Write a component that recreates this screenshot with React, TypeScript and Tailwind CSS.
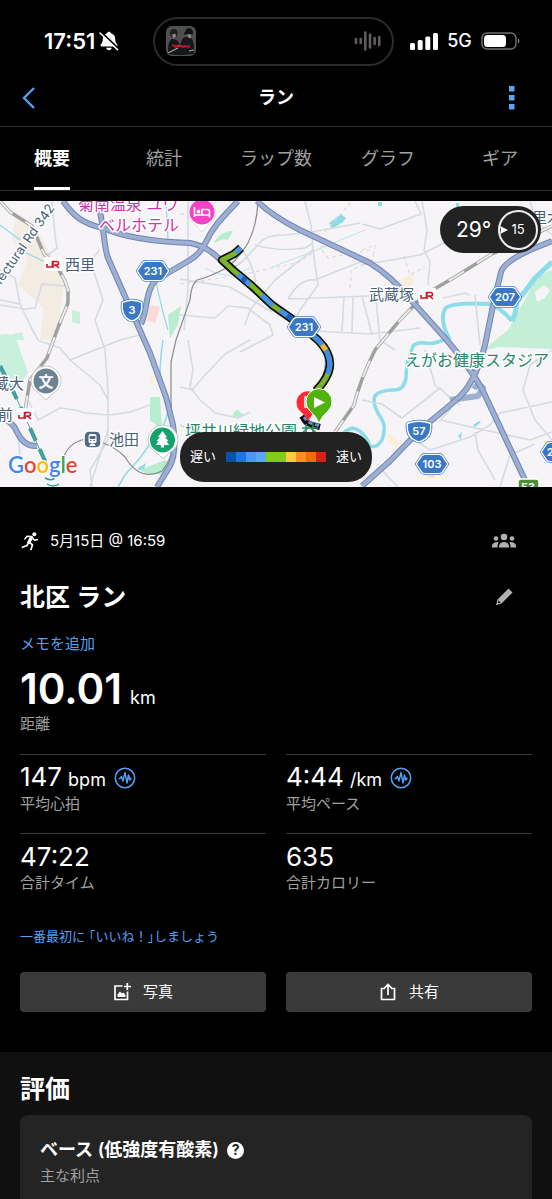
import React, { useState } from 'react';

const tabs = ['概要', '統計', 'ラップ数', 'グラフ', 'ギア'];

const paceColors = [
  'bg-[#0552a8]',
  'bg-[#1b77da]',
  'bg-[#4a98f0]',
  'bg-[#5aa7fa]',
  'bg-[#82cb1a]',
  'bg-[#82cb1a]',
  'bg-[#ffcb45]',
  'bg-[#ff8c28]',
  'bg-[#ef6a10]',
  'bg-[#d6201e]',
];

const stats = [
  { value: '147', unit: 'bpm', label: '平均心拍', chart: true },
  { value: '4:44', unit: '/km', label: '平均ペース', chart: true },
  { value: '47:22', unit: '', label: '合計タイム', chart: false },
  { value: '635', unit: '', label: '合計カロリー', chart: false },
];

function StatusBar() {
  return (
    <div className="flex h-[70px] items-center pt-3 pr-8 pl-11">
      <div className="flex w-[109px] items-center gap-1">
        <span className="text-[22px] leading-7 font-semibold">17:51</span>
        <svg className="h-5 w-5 shrink-0" viewBox="0 0 20 20">
          <path d="M10 .8c1 0 1.700.6 1.900 1.400 2.700.8 4.300 2.800 4.300 5.500 0 3.200.7 4.300 1.900 5.500.9.9.4 2.300-.9 2.300H2.800c-1.300 0-1.800-1.400-.9-2.300 1.200-1.200 1.900-2.300 1.900-5.500 0-2.700 1.600-4.700 4.300-5.500C8.300 1.400 9 .8 10 .8zM7.200 16.800h5.600c-.3 1.500-1.400 2.400-2.800 2.400s-2.500-.9-2.800-2.400z" fill="#fff" />
          <path d="M1.600 .6l17.600 16.900" stroke="#000" strokeWidth="2" />
          <path d="M1 2l17.500 16.700" stroke="#fff" strokeWidth="1.600" strokeLinecap="round" />
        </svg>
      </div>
      <div className="flex h-[49px] w-[241px] items-center justify-between rounded-full border-2 border-[#2b2b2b] px-[11px]">
        <svg className="h-[30px] w-[30px]" viewBox="0 0 30 30">
          <rect width="30" height="30" rx="6" fill="#4d5051" />
          <path d="M2 28c0-7 0-13 4-15 4 0 7 2 8 6l2-5c1-3 4-4 7-3 4 1 6 7 5 17q-13 2-26 0z" fill="#15171a" />
          <path d="M4 8q0-5 4-5t3.500 5L10 12H6z" fill="#221c1c" />
          <path d="M6 8.500l3.500-1 .5 3.500-3 1.500z" fill="#8f8784" />
          <path d="M18 7.500h9M20 7c0-5 6-5 6 0" stroke="#121212" strokeWidth="2" fill="#121212" />
          <path d="M21 8.500h4v3l-2 1z" fill="#8f8784" />
          <path d="M2 27l10-5M23 25l5-1" stroke="#a5a5a5" strokeWidth="1.200" />
          <path d="M6 19l4 1 3-1 4 2 7-1M8 21l10-1 6 1" stroke="#b81f2c" strokeWidth="1.300" fill="none" />
        </svg>
        <svg className="h-5 w-[27px]" viewBox="0 0 27 20" stroke="#625c5e" strokeWidth="2.600" strokeLinecap="round">
          <path d="M2 8v4M6.700 8v4M11.300 1.500v17M16 3.500v13M20.600 7v6M25.200 6v8" />
        </svg>
      </div>
      <div className="ml-4 flex flex-1 items-center justify-between">
        <svg className="h-[18px] w-7" viewBox="0 0 28 18" fill="#fff">
          <rect x="0" y="11" width="5" height="7" rx="1.500" />
          <rect x="7.700" y="8" width="5" height="10" rx="1.500" />
          <rect x="15.300" y="4.500" width="5" height="13.500" rx="1.500" />
          <rect x="23" y="1" width="5" height="17" rx="1.500" />
        </svg>
        <span className="text-lg leading-6 font-medium">5G</span>
        <svg className="h-[18px] w-[39px]" viewBox="0 0 39 18">
          <rect x="1" y="1" width="34" height="16" rx="5" fill="none" stroke="#6f6f6f" strokeWidth="1.500" />
          <rect x="3" y="3" width="22" height="12" rx="3.500" fill="#fff" />
          <path d="M37 6.500c1.800.7 1.800 4.300 0 5z" fill="#8a8a8a" />
        </svg>
      </div>
    </div>
  );
}

function JrMark({ x, y }: { x: number; y: number }) {
  return (
    <g>
      <rect x={x - 9} y={y - 7} width="18" height="14" rx="2" fill="#fff" />
      <path
        d={`M${x - 6} ${y}v3h3.500q2 0 2-2v-4M${x} ${y + 4}v-6.500h3.500q2 0 2 1.800t-2 1.800h-2.500M${x + 2.5} ${y + 1}l3.500 3`}
        fill="none"
        stroke="#d6112b"
        strokeWidth="1.600"
      />
    </g>
  );
}

function HexBadge({ x, y, label }: { x: number; y: number; label: string }) {
  const d = `M${x - 15} ${y}l5-7.500q1-1.500 3-1.500h14q2 0 3 1.500l5 7.500-5 7.500q-1 1.500-3 1.500h-14q-2 0-3-1.500z`;
  return (
    <g strokeLinejoin="round">
      <path d={d} fill="none" stroke="#3a78c6" strokeWidth="4" />
      <path d={d} fill="#3a78c6" stroke="#fff" strokeWidth="2.600" />
      <path d={d} fill="#3a78c6" />
      <text x={x} y={y + 4} textAnchor="middle" fontSize="11" fontWeight="600" fill="#fff">{label}</text>
    </g>
  );
}

function ShieldBadge({ x, y, label, wide }: { x: number; y: number; label: string; wide?: boolean }) {
  const w = wide ? 11 : 9;
  const d = `M${x - w} ${y - 7}q${w} -4 ${w * 2} 0q1 12-${w - 3} 16q-3 2-6 0q-${w - 2}-4-${w - 3}-16z`;
  return (
    <g strokeLinejoin="round">
      <path d={d} fill="none" stroke="#3a78c6" strokeWidth="4.500" />
      <path d={d} fill="#3a78c6" stroke="#fff" strokeWidth="3" />
      <path d={d} fill="#3a78c6" />
      <text x={x} y={y + 4} textAnchor="middle" fontSize="11" fontWeight="600" fill="#fff">{label}</text>
    </g>
  );
}

function RouteMap() {
  const highways = [
    'M63 201C74 217 84 224 103 228C126 238 160 242 190 243C206 246 214 254 222 261L252 288L304 328C330 345 336 366 316 392',
    'M97 201C105 225 103 245 108 258L131 310L150 353L166 397L173 425Q177 452 170 466L157 487',
    'M141 324Q144 318 146 306Q149 286 156 280L190 260Q200 254 206 242C213 226 224 216 238 201',
    'M257 201Q272 216 300 230L370 263Q392 277 410 299L445 338Q472 370 483 391L526 482',
    'M362 486L390 461L420 430L455 401Q475 385 485 345Q492 308 501 272Q504 262 530 250L552 241',
    'M0 418Q12 420 17 432Q24 447 37 446',
  ];
  const roads =
    'M0 300L20 304L15 278L0 270M20 304L30 325L38 340M0 305L25 309L35 308L42 284L66 286M52 201L55 235L57 248L48 255M100 250L90 260L103 300L95 320L105 350L108 390L108 430L90 487M188 201V290L184 330M305 201L311 225L313 250L318 285L300 310L290 330M255 245Q280 252 305 248L313 243M258 246Q262 235 285 235L312 232L360 223M313 250L275 280L250 310L245 325M180 315L215 318L228 306L248 308L270 325L273 335L240 352M288 299L370 296M288 299Q300 278 315 280L365 260M344 296L342 332M353 296L352 332M362 296L372 335M315 331L370 334L420 328M238 245Q252 260 256 282M180 279L230 287L272 312M362 224L380 229L421 214L415 201M422 201L427 230L424 250L430 262L428 285M362 265L420 255L450 240L500 230M530 201L535 220L552 235M470 295L465 293L443 298M475 295L480 345M376 300L380 340L395 350M180 387L192 390L205 375L225 354L250 340M188 340L193 370L190 387L200 400L215 413L238 418L250 412M180 425L190 430M37 340L60 348L70 360L95 350L120 340L140 335M70 360L100 385L108 400L108 440L90 470L92 487M28 400L38 420L60 408L75 410L85 413L110 415L130 412L150 405M362 400L382 404L402 418M402 418L440 388L452 400L450 410L440 420L462 425L530 440L552 432M425 350L435 385L460 405M415 440L430 450L470 437L490 425L500 413L552 402M535 444L510 455L500 487M475 432L478 450L495 480M552 350L530 365L523 390L535 420L552 440M380 468L398 487M230 270L242 262L258 245';
  const rails = [
    'M0 201L10 212L32 226L44 254Q62 268 68 290V303L59 325L47 358L30 380L25 411',
    'M552 226L490 255L455 277L424 295L400 320L375 350Q360 380 354 405L335 432',
  ];
  const track = 'M241 248L234 254L222 260L234 271L252 286L272 305L292 319L304 328L318 340Q330 352 330 364T316 391';

  return (
    <svg
      className="block h-[286px] w-full"
      viewBox="0 201 552 286"
      preserveAspectRatio="xMidYMid slice"
      fontFamily="Inter, 'Noto Sans CJK JP', sans-serif"
      role="img"
      aria-label="Google"
    >
      <rect y="201" width="552" height="286" fill="#f6f4f6" />

      {/* land use */}
      <path d="M16 212L35 228L55 262L64 286L58 325L52 340L40 340L44 308L18 285L28 258L12 240z" fill="#f2ece2" />
      <path d="M0 335Q15 330 20 350L28 372L20 385L0 390zM72 310L80 312L80 324L72 322zM10 335l12-3 2 8H8z" fill="#c8f0dc" />
      <path d="M214 242Q222 230 233 231L228 240Q222 238 215 243zM168 315L181 306L178 325L170 338zM150 397H160L162 430L150 420zM140 470L165 460L172 466L162 475L145 473zM232 417Q236 405 241 413L246 415L236 418z" fill="#b9edd0" />
      <path d="M552 270Q535 275 528 294L508 330Q498 338 484 350L500 347L552 349z" fill="#c2efd6" />
      <path d="M535 292L544 285L550 290L545 298L537 302z" fill="#f6f4f6" />
      <path d="M150 305l10 2 -5 16 -8-2zM428 470l8 2-2 6-6-1z" fill="#fbd9d5" />
      <path d="M388 433l12 10-3 5-9-8zM150 375l5 2-3 10z" fill="#fbefd4" />
      <path d="M400 280l14-8v12l-12 3z" fill="#f8eede" />

      {/* water */}
      <g fill="none" stroke="#8cdcea" strokeLinejoin="round">
        <path d="M450 340Q439 320 445 309Q450 302 490 304Q502 309 512 321" strokeWidth="4" />
        <path d="M512 321Q516 314 517 302L535 278L552 262" strokeWidth="5" />
        <path d="M446 338Q436 345 424 343Q413 342 412 349Q406 363 406 378Q404 391 392 390Q374 391 374 400Q374 408 381 418Q387 426 382 440Q376 449 370 446Q364 430 352 428Q340 432 335 445" strokeWidth="3.500" />
        <path d="M163 340Q156 385 166 400Q172 412 160 430L140 458L125 475L118 487" strokeWidth="1.500" />
        <path d="M156 282Q162 310 168 330M20 250L45 262M166 201L168 240M0 225L20 240" strokeWidth="1.200" />
        <path d="M272 267L312 252L365 230M205 268Q225 282 250 268" strokeWidth="1" opacity=".6" />
        <path d="M0 415L18 435L20 455" strokeWidth="1.500" opacity=".6" />
      </g>
      <path d="M329 223L341 214L346 218L343 222L332 229zM473 425l6-4 2 1-6 5zM458 436l4-4-1 8zM378 202h4v4h-4zM456 203h3v5l-3 1zM138 468l8-5-2 6-6 1z" fill="#8fdbe8" />

      {/* small streets */}
      <path d={roads} fill="none" stroke="#d5dbe3" strokeWidth="1.600" strokeLinejoin="round" />
      <path d="M180 284L240 275L300 262L330 240M325 232L350 203M322 250L328 258L370 250M350 288L352 270L370 260M404 256L410 275L425 267M362 250L375 245L372 262M180 215L220 201" fill="none" stroke="#dfdadc" strokeWidth="1.200" strokeDasharray="4 3" />

      {/* railways */}
      <g fill="none">
        {rails.map((d) => (
          <g key={d}>
            <path d={d} stroke="#a0a0a0" strokeWidth="3.500" />
            <path d={d} stroke="#ededed" strokeWidth="2" strokeDasharray="18 15" />
          </g>
        ))}
        <path d="M258 201Q257 225 248 243Q238 259 228 267Q210 277 197 280Q191 285 190 300L176 340L171 362V400L173 440Q173 458 162 471Q140 482 125 457Q115 447 103 443M85 439Q65 444 63 462" stroke="#8b8b8b" strokeWidth="1.200" />
        <path d="M0 366L15 395L40 450L46 463" stroke="#3c9a98" strokeWidth="4" strokeDasharray="14 9" />
        <path d="M0 366L15 395L40 450L46 463" stroke="#5aa7a5" strokeWidth="1" />
        <path d="M45 478q8 4 10-1M47 484q6 4 12 0" stroke="#23a197" strokeWidth="1.500" />
      </g>

      {/* highways */}
      <g fill="none" strokeLinejoin="round">
        <path d="M450 400L478 396L483 388Q478 382 474 389" stroke="#9fb1d0" strokeWidth="6" />
        {highways.map((d) => (
          <path key={d} d={d} stroke="#7387b5" strokeWidth="6" />
        ))}
        {highways.map((d) => (
          <path key={d} d={d} stroke="#9db0d3" strokeWidth="3.800" />
        ))}
      </g>

      {/* recorded track */}
      <g fill="none" strokeLinejoin="round">
        <path d={track} stroke="#0b0f0a" strokeWidth="8.500" />
        <path d={track} stroke="#79b42c" strokeWidth="5" />
        <path d="M241 248L236 252.500M238 274.500L250 284.500M262 295.500L273 305.500M280 310.500L291 318" stroke="#4a90ea" strokeWidth="5" />
        <path d="M242 278l4 3M287 315.500l7 5" stroke="#1c5cb8" strokeWidth="5" />
        <path d="M304 328L318 340Q329 351 330 364L328 374" stroke="#3f8de8" strokeWidth="5" />
        <path d="M322 345l4 5" stroke="#f0b23a" strokeWidth="5" />
        <path d="M302 416l4 6 6 3 8 2" stroke="#111" strokeWidth="6" />
        <path d="M304 417l4 5 12 4" stroke="#5b95d6" strokeWidth="3" strokeDasharray="4 3" />
      </g>

      {/* place names */}
      <g fill="#47607a" stroke="#fff" strokeWidth="3" strokeLinejoin="round" paintOrder="stroke" fontSize="15">
        <text x="55" y="208" textAnchor="end" fontSize="13" transform="rotate(-55 55 208)">efectural Rd 342</text>
        <text x="65" y="270">西里</text>
        <text x="369" y="300">武蔵塚</text>
        <text x="109" y="445">池田</text>
        <text x="24" y="389" textAnchor="end">蔵大</text>
        <text x="13" y="420" textAnchor="end">前</text>
        <text x="532" y="223">里木</text>
        <g fill="#cf34a7" fontSize="16">
          <text x="78" y="210">菊南温泉 ユウ</text>
          <text x="99" y="231">ベルホテル</text>
        </g>
        <g fill="#26876a" fontSize="16">
          <text x="405" y="366">えがお健康スタジア</text>
          <text x="185" y="437">坪井川緑地公園</text>
        </g>
      </g>
      <path d="M302 428h16M306 424v10M313 423v10M301 434l8-7 9 7" stroke="#2a8f6c" strokeWidth="1.500" fill="none" />

      <JrMark x={53} y={264} />
      <JrMark x={427} y={295} />
      <JrMark x={25} y={415} />

      <HexBadge x={153} y={271} label="231" />
      <HexBadge x={304} y={327} label="231" />
      <HexBadge x={505} y={297} label="207" />
      <HexBadge x={432} y={464} label="103" />
      <HexBadge x={557} y={452} label="232" />
      <ShieldBadge x={132} y={310} label="3" />
      <ShieldBadge x={419} y={431} label="57" wide />
      <rect x="518" y="479" width="21" height="18" rx="3" fill="#4f8f36" stroke="#fff" strokeWidth="1.500" />
      <text x="528" y="491" textAnchor="middle" fontSize="11" fontWeight="600" fill="#fff">53</text>

      {/* hotel */}
      <path d="M202 198a14 14 0 0 1 14 14q0 8-9 14l-5 6-5-6q-9-6-9-14a14 14 0 0 1 14-14z" fill="#fff" stroke="#ccc" strokeWidth=".6" />
      <circle cx="202" cy="212" r="12.500" fill="#f442c4" />
      <path d="M194.500 207v10M194.500 215h15M209.500 217.500v-6q0-2-2-2H202v5.500" stroke="#fff" strokeWidth="1.600" fill="none" />
      <circle cx="198.500" cy="211.500" r="1.900" fill="#fff" />

      {/* university */}
      <path d="M46 366a15 15 0 0 1 15 15q0 8-9 13l-6 6-6-6q-9-5-9-13a15 15 0 0 1 15-15z" fill="#fff" stroke="#bbb" strokeWidth=".8" />
      <circle cx="46" cy="381" r="12.500" fill="#6b8494" />
      <text x="46" y="387" textAnchor="middle" fontSize="15" fontWeight="700" fill="#fff">文</text>

      {/* park */}
      <path d="M163 425a15 15 0 0 1 15 15q0 8-9 13l-6 6-6-6q-9-5-9-13a15 15 0 0 1 15-15z" fill="#fff" stroke="#bbb" strokeWidth=".8" />
      <circle cx="162.500" cy="440" r="12.500" fill="#14a36b" />
      <path d="M162.500 431l4.500 6h-2l3.500 4h-2l2.500 4h-5v2.500h-3V445h-5l2.500-4h-2l3.500-4h-2z" fill="#fff" />

      {/* station */}
      <rect x="84" y="431" width="17" height="17" rx="5" fill="#546a82" stroke="#fff" strokeWidth="1.500" />
      <path d="M88.500 436q0-2 2-2h4q2 0 2 2v5.500q0 1.500-2 1.500h-4q-2 0-2-1.500zM89 446l2-2.500h3l2 2.500" fill="#fff" />
      <path d="M90 436.500h5v2h-5zM90 440.500h1.500M93.500 440.500H95" fill="#546a82" stroke="#546a82" strokeWidth="1" />

      {/* finish and start */}
      <path d="M308 422q-3-7-8-11a11.500 11.500 0 1 1 16 0q-5 4-8 11z" fill="#fb2b38" />
      <path d="M309 397h-4v10h6" fill="none" stroke="#fff" strokeWidth="1.500" />
      <path d="M319 423q-3-7-9-12a13 13 0 1 1 18 0q-6 5-9 12z" fill="#4fb20d" stroke="#fff" strokeWidth="1" />
      <path d="M314 397l11 5.500-11 5.500z" fill="#fff" />

      <text x="8" y="473" fontSize="22" fontWeight="600" fontFamily="Lato, sans-serif" stroke="#fff" strokeWidth="2" paintOrder="stroke">
        <tspan fill="#4285f4">G</tspan>
        <tspan fill="#ea4335">o</tspan>
        <tspan fill="#fbbc05">o</tspan>
        <tspan fill="#4285f4">g</tspan>
        <tspan fill="#34a853">l</tspan>
        <tspan fill="#ea4335">e</tspan>
      </text>
    </svg>
  );
}

function RunIcon() {
  return (
    <svg className="h-5 w-5" viewBox="0 0 20 20" fill="none" stroke="#fff" strokeLinecap="round" strokeLinejoin="round">
      <circle cx="14.300" cy="3.200" r="2" fill="#fff" stroke="none" />
      <path d="M11.500 6.500L9 11" strokeWidth="3.400" />
      <path d="M11 5.500L7 5.200 4.800 8M12.500 7l2 2.200 3-.7" strokeWidth="1.400" />
      <path d="M8.500 11.500L7 14.500l-4.500 1.800M9.500 11.500l3 2.300-1.500 4.700" strokeWidth="1.700" />
    </svg>
  );
}

function PulseIcon() {
  return (
    <svg className="h-[22px] w-[22px]" viewBox="0 0 22 22" fill="none" stroke="#51a1f5">
      <circle cx="11" cy="11" r="9.700" strokeWidth="1.500" />
      <path d="M4.500 11.500h1.500L7.500 9.500l1.500 4.500L11 5.500l2 10.500 1.500-8 1.200 5 1-1.500h1" strokeWidth="1.400" strokeLinejoin="round" />
    </svg>
  );
}

export default function App() {
  const [activeTab, setActiveTab] = useState('概要');

  return (
    <div className="flex min-h-screen flex-col overflow-x-hidden bg-black font-[Inter,'Noto_Sans_CJK_JP',sans-serif] text-white" lang="ja">
      <StatusBar />

      <header className="grid h-[57px] grid-cols-3 items-center border-b border-[#2c2c2c] px-5">
        <button aria-label="戻る" className="justify-self-start">
          <svg className="h-6 w-4" viewBox="0 0 16 24" fill="none" stroke="#51a1f5" strokeWidth="2.400">
            <path d="M14 2L4 12l10 10" />
          </svg>
        </button>
        <h1 className="text-center text-lg leading-6 font-semibold">ラン</h1>
        <button aria-label="メニュー" className="mr-4 justify-self-end">
          <svg className="h-6 w-2" viewBox="0 0 8 24" fill="#5aa5f5">
            <path d="M1 0h5.500v5.500H1zM1 9h5.500v5.500H1zM1 18h5.500v5.500H1z" />
          </svg>
        </button>
      </header>

      <nav className="-mx-1 mb-[10px] grid h-16 grid-cols-5 border-b border-[#2c2c2c]">
        {tabs.map((tab) => (
          <button
            key={tab}
            onClick={() => setActiveTab(tab)}
            className={`flex justify-center text-lg leading-[64px] ${tab === activeTab ? 'font-semibold text-white' : 'text-[#a0a0a0]'}`}
          >
            <span className={tab === activeTab ? 'h-[63px] border-b-3 border-white' : ''}>{tab}</span>
          </button>
        ))}
      </nav>

      <section className="relative">
        <RouteMap />
        <div className="absolute top-[5px] right-[11px] flex h-[47px] w-[101px] items-center justify-between rounded-full bg-[#222] pr-[3px] pl-4">
          <span className="text-[21px] leading-7">29°</span>
          <span className="relative flex h-10 w-10 items-center justify-center rounded-full border-2 border-[#eee] text-[13px]">
            <svg className="absolute left-0 h-2 w-2" viewBox="0 0 8 8" fill="#fff">
              <path d="M0 0l8 4-8 4 1-4z" />
            </svg>
            15
          </span>
        </div>
        <div className="absolute bottom-[5px] left-1/2 flex h-[50px] w-[192px] -translate-x-1/2 items-center justify-between rounded-3xl bg-[#222] px-[10px] text-[13px]">
          <span>遅い</span>
          <div className="flex">
            {paceColors.map((color, i) => (
              <span key={i} className={`h-[10px] w-[10px] ${color}`} />
            ))}
          </div>
          <span>速い</span>
        </div>
      </section>

      <main className="px-5 pb-10">
        <div className="mt-[42px] flex h-6 items-center">
          <RunIcon />
          <span className="ml-[10px] text-[15px]">5月15日 @ 16:59</span>
          <svg className="mr-4 ml-auto h-4 w-6" viewBox="0 0 24 16" fill="#b0b0b0">
            <circle cx="12" cy="4" r="3.300" />
            <circle cx="4" cy="5.500" r="2.300" />
            <circle cx="20" cy="5.500" r="2.300" />
            <path d="M7 14.500V13q1-4 5-4t5 4v1.500zM0 14.500v-2Q1 9 5.500 9l1 .5Q5.500 11 5.500 14.500zM24 14.500v-2Q23 9 18.500 9l-1 .5q1 1.500 1 5z" />
          </svg>
        </div>

        <div className="mt-7 flex h-8 items-center justify-between">
          <h2 className="text-[25px] leading-8 font-semibold">北区 ラン</h2>
          <button aria-label="編集" className="mr-[18px]">
            <svg className="h-5 w-5" viewBox="0 0 20 20" fill="#b0b0b0">
              <path fillRule="evenodd" d="M14.500 1.500l4 4L7.500 16.500 2 18.200l1.500-5.700zM4.600 13.500l-.8 2.800 2.800-.9z" />
            </svg>
          </button>
        </div>

        <a href="#memo" className="mt-[19px] block text-[15px] leading-6 text-[#51a1f5]">メモを追加</a>

        <div className="mt-[9px] flex items-baseline gap-2 leading-[48px]">
          <span className="text-[42px] font-semibold">10.01</span>
          <span className="text-lg leading-6">km</span>
        </div>
        <p className="mt-px text-[15px] leading-5 text-[#a0a0a0]">距離</p>

        <div className="mt-5 grid grid-cols-2 gap-x-5">
          {stats.map((stat) => (
            <div key={stat.label} className="border-t border-[#3a3a3a] pt-[7px] pb-[19px]">
              <div className="flex h-8 items-center gap-2">
                <div className="flex items-baseline gap-[6px] leading-8">
                  <span className="text-[26px]">{stat.value}</span>
                  {stat.unit && <span className="text-lg leading-8">{stat.unit}</span>}
                </div>
                {stat.chart && <PulseIcon />}
              </div>
              <p className="text-[15px] leading-5 text-[#a0a0a0]">{stat.label}</p>
            </div>
          ))}
        </div>

        <a href="#like" className="mt-[14px] block text-[13px] leading-5 text-[#51a1f5]">
          一番最初に<span className="ml-1 [font-feature-settings:'halt']">「</span>いいね！<span className="[font-feature-settings:'halt']">」</span>しましょう
        </a>

        <div className="mt-[26px] grid grid-cols-2 gap-5">
          <button className="flex h-10 items-center justify-center gap-3 rounded bg-[#3a3a3a] text-[15px]">
            <svg className="h-[18px] w-[18px]" viewBox="0 0 18 18" fill="none" stroke="#fff" strokeWidth="1.700">
              <path d="M9.500 3H2v13.500h12.500V8.500M14.300 0v7M11 3.500h7" />
              <path d="M4.500 14v-2.500l2.500-3 2 2 1.500-1 2 2.500V14z" fill="#fff" stroke="none" />
            </svg>
            写真
          </button>
          <button className="flex h-10 items-center justify-center gap-3 rounded bg-[#3a3a3a] text-[15px]">
            <svg className="h-[18px] w-[18px]" viewBox="0 0 18 18" fill="none" stroke="#fff" strokeWidth="1.700">
              <path d="M6 5.500H2.500v11h13v-11H12M9 12V2M5.500 5L9 1.500 12.500 5" />
            </svg>
            共有
          </button>
        </div>
      </main>

      <section className="flex flex-1 flex-col bg-[#101010] px-5 pt-[21px]">
        <h2 className="text-[25px] leading-8 font-semibold">評価</h2>
        <div className="mt-[10px] flex-1 rounded-t-lg bg-[#242424] px-5 pt-[23px] pb-3">
          <div className="flex items-center gap-2">
            <h3 className="text-lg leading-6 font-semibold">ベース (低強度有酸素)</h3>
            <button aria-label="ヘルプ" className="flex h-[17px] w-[17px] items-center justify-center rounded-full bg-white text-sm leading-4 font-bold text-[#242424]">?</button>
          </div>
          <p className="mt-1 text-[15px] leading-5 text-[#a0a0a0]">主な利点</p>
        </div>
      </section>
    </div>
  );
}
